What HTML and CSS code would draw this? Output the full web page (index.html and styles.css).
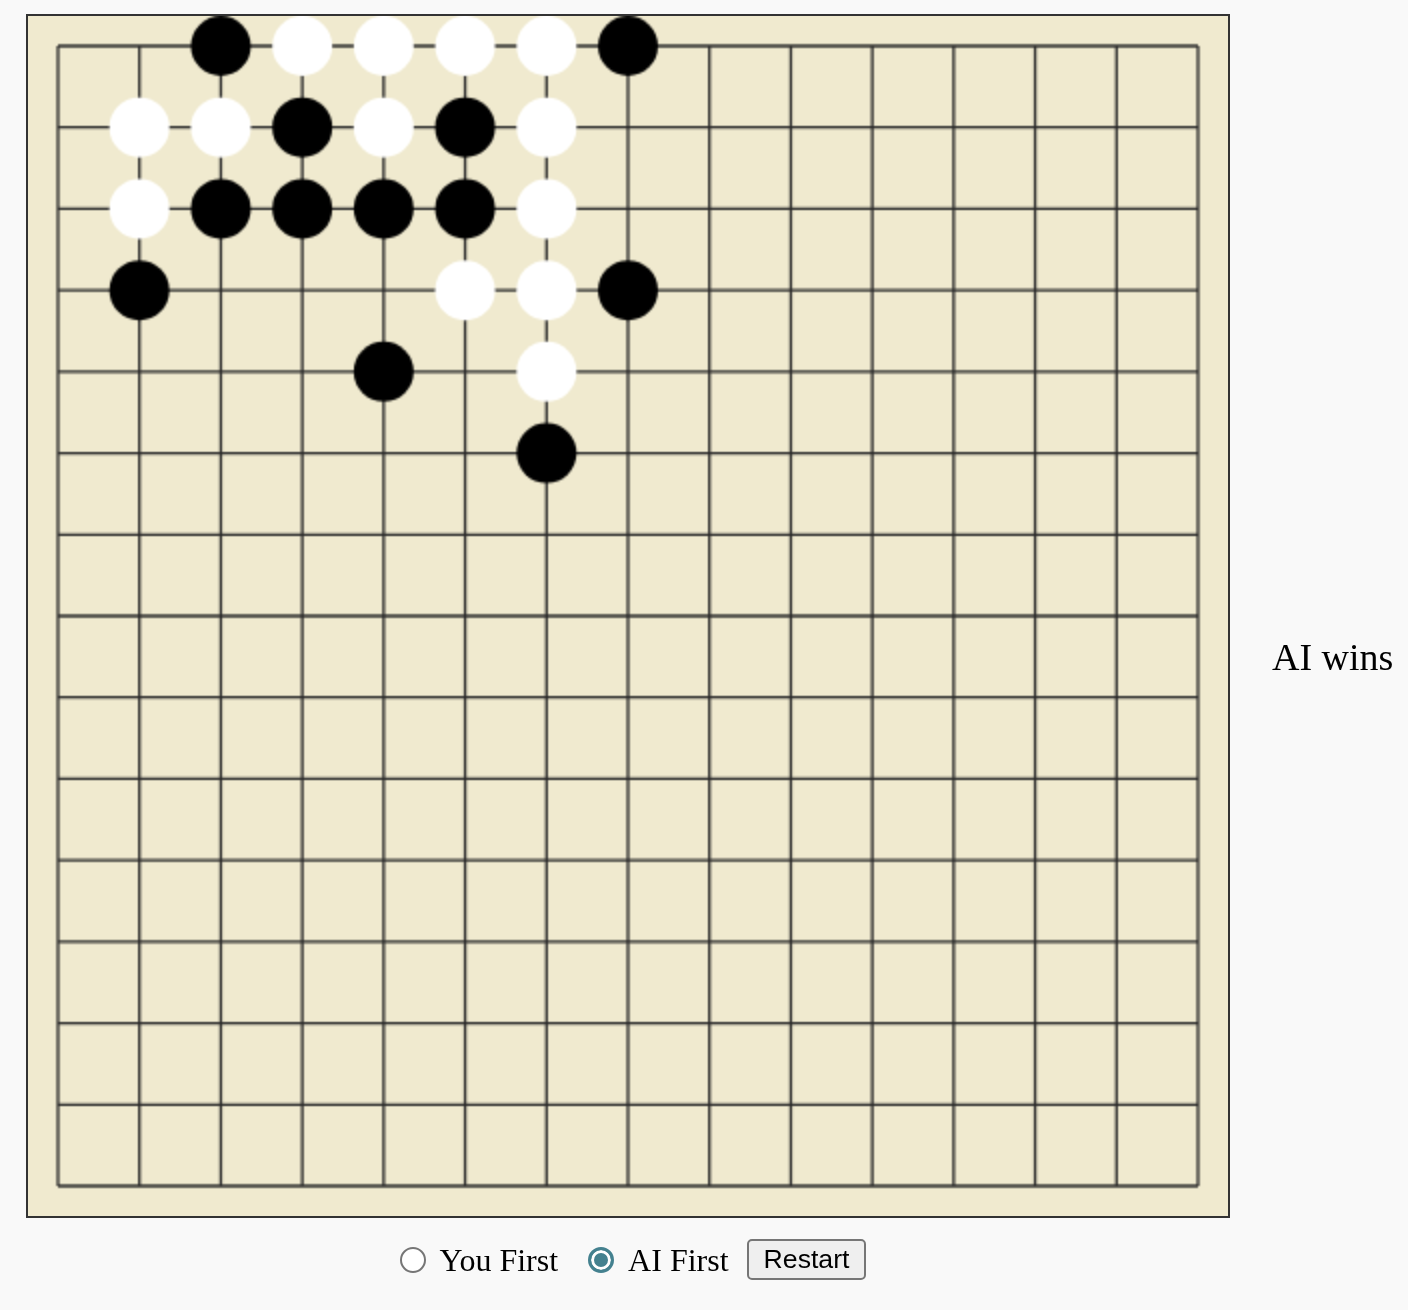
FILE: index.html
```html
<!DOCTYPE html>
<html lang="en">
<head>
    <meta charset="UTF-8">
    <meta name="viewport" content="width=device-width, initial-scale=1.0">
    <link rel="stylesheet" href="styles.css">
    <title>Gomoku</title>
</head>

<body>
    <div class="game">
        <div class="left">
            <canvas id="board" width="600" height="600"></canvas>
            <div class="controls">
                <input type="radio" name="first" id="youFirst">
                <label for="youFirst">You First</label>
                <input type="radio" name="first" id="aiFirst" checked>
                <label for="aiFirst">AI First</label>
                <button id="restartBtn">Restart</button>
            </div>
        </div>
        <div id="status">AI wins</div>
    </div>

    <script>
        const ctx = board.getContext('2d');
        const N = 15;
        const PAD = 15;
        const CELL = (600 - PAD * 2) / (N - 1);

        // 盤面
        ctx.strokeStyle = '#2a2a2a';
        ctx.lineWidth = 1.3;
        for (let i = 0; i < N; i++) {
            const p = PAD + i * CELL;
            ctx.beginPath();
            ctx.moveTo(PAD, p);
            ctx.lineTo(600 - PAD, p);
            ctx.stroke();
            ctx.beginPath();
            ctx.moveTo(p, PAD);
            ctx.lineTo(p, 600 - PAD);
            ctx.stroke();
        }

        // 石 (col, row, color)
        const stones = [
            [2,0,'b'],[3,0,'w'],[4,0,'w'],[5,0,'w'],[6,0,'w'],[7,0,'b'],
            [1,1,'w'],[2,1,'w'],[3,1,'b'],[4,1,'w'],[5,1,'b'],[6,1,'w'],
            [1,2,'w'],[2,2,'b'],[3,2,'b'],[4,2,'b'],[5,2,'b'],[6,2,'w'],
            [1,3,'b'],[5,3,'w'],[6,3,'w'],[7,3,'b'],
            [4,4,'b'],[6,4,'w'],
            [6,5,'b']
        ];
        stones.forEach(([c, r, color]) => {
            ctx.beginPath();
            ctx.arc(PAD + c * CELL, PAD + r * CELL, 15, 0, Math.PI * 2);
            ctx.fillStyle = color === 'b' ? '#000' : '#fff';
            ctx.fill();
        });
    </script>
</body>
</html>
```

FILE: styles.css
```css
body {
    margin: 0;
    background-color: #f9f9f9;
    font-family: "Liberation Serif", "Times New Roman", serif;
}
.game {
    display: flex;
    align-items: center;
    gap: 42px;
    padding: 14px 0 0 26px;
}
.left {
    display: flex;
    flex-direction: column;
    width: 1204px;
}
#board {
    display: block;
    width: 1200px;
    height: 1200px;
    border: 2px solid #333;
    background-color: #f0eacf;
}
.controls {
    display: flex;
    align-items: center;
    justify-content: center;
    height: 41px;
    margin: 21px 0 20px 0;
    padding-left: 10px;
    font-size: 32px;
}
.controls input {
    appearance: none;
    width: 26px;
    height: 26px;
    margin: 0 14px 0 0;
    border: 2px solid #767676;
    border-radius: 50%;
    background-color: #fff;
    box-sizing: border-box;
}
.controls input:checked {
    border: 3px solid #44818f;
    background-color: #44818f;
    box-shadow: inset 0 0 0 3px #fff;
}
.controls label {
    margin-right: 30px;
    line-height: 1;
}
.controls label:nth-of-type(2) {
    margin-right: 18px;
}
#restartBtn {
    height: 41px;
    padding: 0 15px;
    font-family: "Liberation Sans", Arial, sans-serif;
    font-size: 26.67px;
    color: #000;
    background-color: #efefef;
    border: 2px solid #767676;
    border-radius: 5px;
}
#status {
    font-size: 38px;
}
```
